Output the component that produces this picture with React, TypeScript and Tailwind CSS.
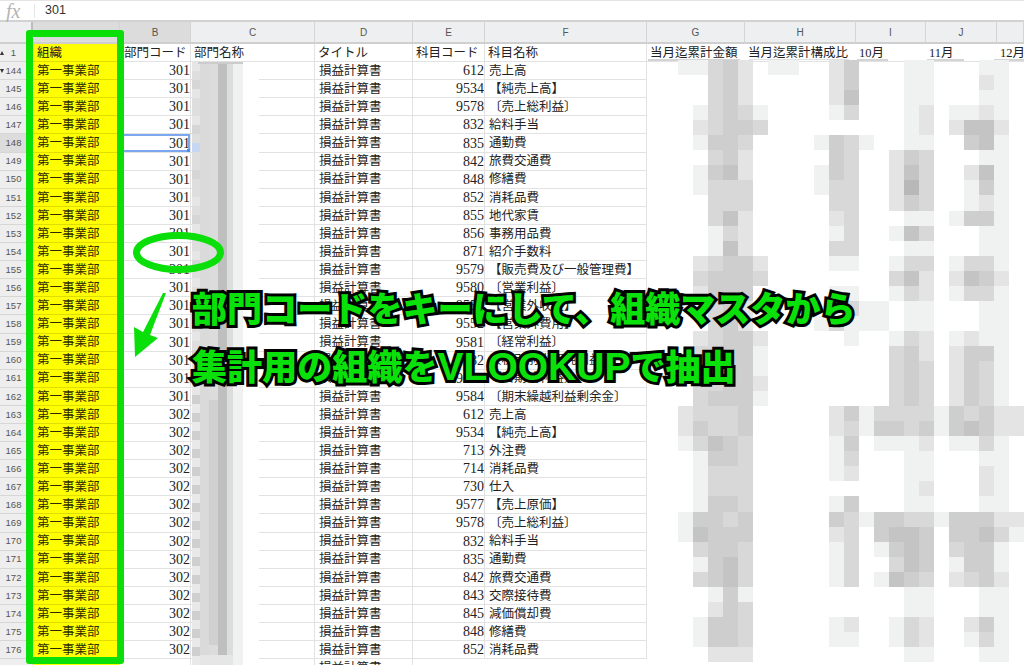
const cols = 'grid-cols-[33px_87px_71px_124px_98px_72px_162px_98px_111px_70px_71px_27px]';
const cellFont = "font-['Liberation_Serif','Noto_Sans_CJK_JP',serif]";

const accounts: [string, string][] = [
    ['612', '売上高'],
    ['9534', '【純売上高】'],
    ['9578', '〔売上総利益〕'],
    ['832', '給料手当'],
    ['835', '通勤費'],
    ['842', '旅費交通費'],
    ['848', '修繕費'],
    ['852', '消耗品費'],
    ['855', '地代家賃'],
    ['856', '事務用品費'],
    ['871', '紹介手数料'],
    ['9579', '【販売費及び一般管理費】'],
    ['9580', '〔営業利益〕'],
    ['9551', '【営業外収益】'],
    ['9552', '【営業外費用】'],
    ['9581', '〔経常利益〕'],
    ['9582', '〔税引前当期純利益〕'],
    ['9583', '〔当期純利益〕'],
    ['9584', '〔期末繰越利益剰余金〕'],
    ['612', '売上高'],
    ['9534', '【純売上高】'],
    ['713', '外注費'],
    ['714', '消耗品費'],
    ['730', '仕入'],
    ['9577', '【売上原価】'],
    ['9578', '〔売上総利益〕'],
    ['832', '給料手当'],
    ['835', '通勤費'],
    ['842', '旅費交通費'],
    ['843', '交際接待費'],
    ['845', '減価償却費'],
    ['848', '修繕費'],
    ['852', '消耗品費'],
];

const shades: Record<string, string> = {
    a: '#f0f1f1',
    b: '#e4e4e4',
    c: '#d8d8d8',
    d: '#cecece',
    e: '#c4c4c4',
    f: '#b8b8b8',
};

// blurred figures on the right, one letter per 15px block, starting at x=648 y=60
const mosaic = [
    '..aacdb.aa..bd...aa...aa.',
    '....cdb.....bd...aa...ba.',
    '....cdb.....be...aa...aa.',
    '...acdca....ac...ab.aaba.',
    '...bcddc.........ab.beeb.',
    '...addc....adca..aa..dea.',
    '....cdb.....dc..bdc...aa.',
    '...adeb....adc..bec..bea.',
    '...accc....acc..bfc..ada.',
    '....ccc.....cc..bdc..aba.',
    '....ceb.....bc...aa.adda.',
    '....acb.....ac..aec...aa.',
    '....aeb.....cc...aa...aa.',
    '...bcddb....aa..acc.acca.',
    '...cdddc........ceb.bedb.',
    '...bddd.....aa..acb.acca.',
    '....cdb.....acaa.aa...aa.',
    '....cdb....acaaa.aa...aa.',
    '...bcddb.....a..acb.abaa.',
    '...ccdda........cdb.bdda.',
    '...cddda........cdc.bdca.',
    '...ccddb........cdc.bdca.',
    '...cddda........cdc.bdca.',
    '..bcccd.....bdaccccadcdbb',
    '..bdccd.....bcaddcdadedbb',
    '..acedc.....ad.aaab.aaca.',
    '...addc.....ac...aa...aa.',
    '...accc.....ab...aa...ba.',
    '...accc..........ab...ba.',
    '...addc.....ad...aa...aa.',
    '..addcd.....dcaddccadddbb',
    '..aeddd.....bc.deed.ddeca',
    '...cddc.....ac.aded.cdda.',
    '...adec.....ac..ced.adda.',
    '...cdec.....ac.aedc.bcdb.',
    '....ada..........aa...aa.',
    '....bdc..........aa...aa.',
    '...addc.....ab..acb..bda.',
    '...addc.....aa..acb..aca.',
    '....bbb..........aa...aa.',
];

function Mosaic() {
    const leftStrip = Array.from({ length: 67 }, (_, i) => {
        const y = 62 + i * 9;
        if (y < 395) return i % 5 === 2 ? '#d6d6d6' : i % 3 === 0 ? '#e6e6e6' : '#dedede';
        return i % 2 === 0 ? '#e9e9e9' : '#cfcfcf';
    });

    return (
        <svg className="absolute left-0 top-0" width={1024} height={665} shapeRendering="crispEdges">
            {/* column C */}
            <rect x={192} y={62} width={67} height={603} fill="#fff" />
            {leftStrip.map((fill, i) => (
                <rect key={i} x={192} y={62 + i * 9} width={8} height={9} fill={fill} />
            ))}
            <rect x={192} y={143} width={8} height={9} fill="#c5d7f3" />
            <rect x={200} y={62} width={9} height={593} fill="#dadada" />
            <rect x={209} y={62} width={9} height={338} fill="#dcdcdc" />
            <rect x={209} y={400} width={9} height={245} fill="#d0d0d0" />
            <rect x={209} y={645} width={9} height={10} fill="#dcdcdc" />
            <rect x={218} y={62} width={9} height={593} fill="#bfbfbf" />
            <rect x={227} y={62} width={6} height={593} fill="#dddddd" />
            <rect x={233} y={62} width={10} height={603} fill="#f0f1f1" />
            <rect x={200} y={655} width={33} height={10} fill="#e6e6e6" />
            <rect x={198} y={62} width={45} height={2} fill="#cccccc" />

            {/* smudge under the headers of the blurred columns */}
            <rect x={648} y={59} width={92} height={2} fill="#d4d4d4" />
            <rect x={749} y={59} width={100} height={1} fill="#e0e0e0" />
            <rect x={857} y={59} width={31} height={2} fill="#d4d4d4" />
            <rect x={927} y={59} width={37} height={2} fill="#d4d4d4" />
            <rect x={994} y={59} width={30} height={2} fill="#d4d4d4" />

            {mosaic.map((row, r) =>
                row.split('').map((c, i) =>
                    c === '.' ? null : (
                        <rect
                            key={`${r}-${i}`}
                            x={648 + i * 15.05}
                            y={60 + r * 15.05}
                            width={15.05}
                            height={15.05}
                            fill={shades[c]}
                        />
                    ),
                ),
            )}
        </svg>
    );
}

function ColHead({ label, dark }: { label?: string; dark?: boolean }) {
    return (
        <div
            className={`flex items-center justify-center border-r border-b-2 border-r-[#d4d4d4] border-b-[#cfcfcf] font-['Liberation_Sans',sans-serif] text-[10px] text-[#555] ${dark ? 'bg-[#dcdcdc]' : 'bg-[#eeeff0]'}`}
        >
            {label}
        </div>
    );
}

function RowHead({ n, active, mark }: { n: number; active?: boolean; mark?: 'up' | 'down' }) {
    return (
        <div
            className={`relative flex items-center justify-center pr-[5px] border-b border-r border-[#d6d6d6] font-['Liberation_Sans',sans-serif] text-[9.5px] text-[#555] ${active ? 'bg-[#dcdcdc]' : 'bg-[#eeeeee]'}`}
        >
            {mark && (
                <svg className="absolute left-0 top-[7px]" width={4} height={4}>
                    <polygon points={mark === 'up' ? '0,4 2,0 4,4' : '0,0 4,0 2,4'} fill="#333" />
                </svg>
            )}
            {n}
        </div>
    );
}

function Text({ children, right, className = '' }: { children?: React.ReactNode; right?: boolean; className?: string }) {
    return (
        <div
            className={`flex items-center overflow-hidden whitespace-nowrap pt-[1px] border-b border-r border-[#e2e2e2] ${right ? 'justify-end text-[14px]' : 'pl-[4px]'} ${className}`}
        >
            {children}
        </div>
    );
}

function Header() {
    const plain = 'flex items-center overflow-visible whitespace-nowrap pt-[1px] pl-[3px] border-b border-[#e2e2e2]';
    return (
        <>
            <RowHead n={1} mark="up" />
            <div className="flex items-center whitespace-nowrap pt-[1px] pl-[4px] bg-[#ffff00] border-b border-[#dede00]">組織</div>
            <div className={`${plain} pl-[4px] border-r`}>部門コード</div>
            <div className={`${plain} border-r`}>部門名称</div>
            <div className={`${plain} border-r`}>タイトル</div>
            <div className={`${plain} border-r`}>科目コード</div>
            <div className={`${plain} border-r`}>科目名称</div>
            <div className={plain}>当月迄累計金額</div>
            <div className={plain}>当月迄累計構成比</div>
            <div className={plain}>10月</div>
            <div className={plain}>11月</div>
            <div className={plain}>12月</div>
        </>
    );
}

export default function App() {
    return (
        <div className={`relative w-[1024px] h-[665px] overflow-hidden bg-white ${cellFont} text-[12.5px] text-[#222]`}>
            {/* formula bar */}
            <div className="flex items-center h-[22px] border-t border-b-2 border-t-[#e4e4e4] border-b-[#d2d2d2]">
                <span className="w-[34px] pl-[6px] font-['Liberation_Serif',serif] italic text-[20px] leading-none text-[#b5b5b5]">fx</span>
                <div className="w-px h-[14px] bg-[#e6e6e6]" />
                <span className="pl-[10px] font-['Liberation_Sans',sans-serif] text-[12.5px] text-[#333]">301</span>
            </div>

            {/* column letters */}
            <div className={`grid ${cols} h-[22px]`}>
                <div className="bg-[#eeeff0] border-b-2 border-r-2 border-b-[#cfcfcf] border-r-[#bdbdbd]" />
                <ColHead dark />
                <ColHead label="B" dark />
                <ColHead label="C" />
                <ColHead label="D" />
                <ColHead label="E" />
                <ColHead label="F" />
                <ColHead label="G" />
                <ColHead label="H" />
                <ColHead label="I" />
                <ColHead label="J" />
                <ColHead />
            </div>

            {/* sheet */}
            <div className={`grid ${cols} auto-rows-[18.1px] leading-none`}>
                <Header />
                {accounts.map(([code, name], i) => (
                    <div key={i} className="contents">
                        <RowHead n={144 + i} active={i === 4} mark={i === 0 ? 'down' : undefined} />
                        <div className="flex items-center whitespace-nowrap pt-[1px] pl-[4px] bg-[#ffff00] border-b border-[#dede00] text-[#2b2b00]">第一事業部</div>
                        <Text right className="relative">
                            {i < 19 ? 301 : 302}
                            {i === 4 && (
                                <>
                                    <div className="absolute inset-0 border-2 border-[#7aa7ee]" />
                                    <div className="absolute right-[-2px] bottom-[-2px] w-[5px] h-[5px] bg-[#4d8ff0]" />
                                </>
                            )}
                        </Text>
                        <Text />
                        <Text>損益計算書</Text>
                        <Text right>{code}</Text>
                        <Text>{name}</Text>
                        <div />
                        <div />
                        <div />
                        <div />
                        <div />
                    </div>
                ))}
                <RowHead n={177} />
                <div className="bg-[#ffff00]" />
                <Text />
                <Text />
                <Text>損益計算書</Text>
            </div>

            <Mosaic />

            {/* annotations */}
            <div className="absolute left-[26px] top-[30px] w-[98px] h-[634px] rounded-[3px] border-[7px] border-[#0adf0a]" />
            <svg className="absolute left-0 top-0" width={1024} height={665}>
                <ellipse cx={178.5} cy={252.5} rx={42} ry={17} fill="none" stroke="#0adf0a" strokeWidth={7} />
                <polygon points="166,293 150,335 158,338 135,357 134,327 143,332 163,293" fill="#0adf0a" />
            </svg>
            <div className="absolute left-[192px] top-[286px] whitespace-nowrap font-['Noto_Sans_CJK_JP',sans-serif] font-black text-[35.1px] leading-[42px] text-[#0ae00a] [-webkit-text-stroke:6px_#000] [paint-order:stroke_fill]">
                部門コードをキーにして、組織マスタから
            </div>
            <div className="absolute left-[192px] top-[344px] whitespace-nowrap font-['Noto_Sans_CJK_JP',sans-serif] font-black text-[35.1px] leading-[42px] text-[#0ae00a] [-webkit-text-stroke:6px_#000] [paint-order:stroke_fill]">
                集計用の組織を<span className="font-['Liberation_Sans',sans-serif] font-bold text-[39px]">VLOOKUP</span>で抽出
            </div>
        </div>
    );
}
